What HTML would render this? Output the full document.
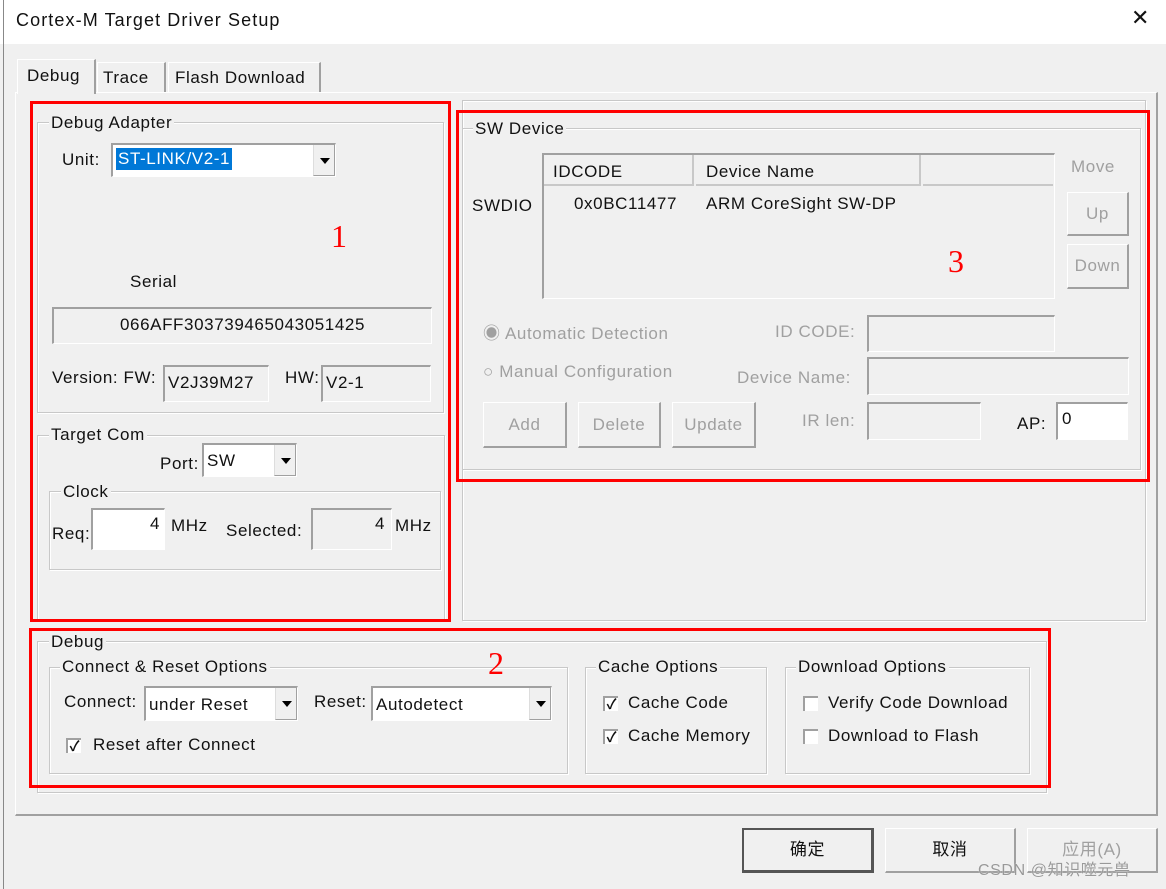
<!DOCTYPE html>
<html><head><meta charset="utf-8"><style>
*{margin:0;padding:0;box-sizing:border-box}
body{width:1166px;height:889px;background:#f0f0f0;position:relative;overflow:hidden;font-family:"Liberation Sans","Noto Sans CJK SC",sans-serif;font-size:17px;color:#111;letter-spacing:0.6px}
div,span{position:absolute}
.t{white-space:nowrap;line-height:20px}
.g{color:#a0a0a0}
.gb{border:1px solid #c8c8c8;box-shadow:inset 1px 1px 0 #fff,1px 1px 0 #fff}
.lbl{background:#f0f0f0;padding:0 2px;line-height:20px;white-space:nowrap}
.sk{border-top:2px solid #a0a0a0;border-left:2px solid #a0a0a0;border-right:1px solid #fff;border-bottom:1px solid #fff;background:#f0f0f0}
.w{background:#fff}
.btn{border:1px solid #fff;border-right:2px solid #a0a0a0;border-bottom:2px solid #a0a0a0;background:#f0f0f0;text-align:center;color:#a0a0a0}
.dd{width:22px;top:0;bottom:0;right:0;background:#f0f0f0;border-left:1px solid #ddd;border-right:1px solid #a0a0a0;border-bottom:1px solid #a0a0a0}
.dd:after{content:"";position:absolute;left:6px;top:13px;border-left:5px solid transparent;border-right:5px solid transparent;border-top:6px solid #000}
.red{border:3px solid #f00}
.cb{width:15px;height:15px;background:#fff;border-top:2px solid #a0a0a0;border-left:2px solid #a0a0a0;font-size:14px;line-height:12px;text-align:center;font-weight:bold;letter-spacing:0}
.num{color:#f00;font-family:"Liberation Serif",serif;font-size:32px}
</style></head><body>
<div style="left:0;top:0;width:1166px;height:44px;background:#fff"></div>
<div style="left:3px;top:0;width:1px;height:889px;background:#888"></div>
<div class="t" style="left:16px;top:10px;font-size:18px;letter-spacing:1.1px">Cortex-M Target Driver Setup</div>
<div class="t" style="left:1131px;top:8px;font-size:22px">✕</div>

<!-- tabs -->
<div style="left:15px;top:92px;width:1143px;height:724px;border-top:1px solid #fff;border-left:1px solid #fff;border-right:2px solid #a0a0a0;border-bottom:2px solid #a0a0a0"></div>
<div style="left:17px;top:59px;width:79px;height:35px;background:#f0f0f0;border-top:1px solid #fff;border-left:1px solid #fff;border-right:2px solid #a0a0a0"></div>
<div class="t" style="left:27px;top:66px">Debug</div>
<div style="left:97px;top:62px;width:69px;height:30px;border-top:1px solid #fff;border-left:1px solid #fff;border-right:2px solid #a0a0a0"></div>
<div class="t" style="left:103px;top:68px">Trace</div>
<div style="left:168px;top:62px;width:153px;height:30px;border-top:1px solid #fff;border-left:1px solid #fff;border-right:2px solid #a0a0a0"></div>
<div class="t" style="left:175px;top:68px">Flash Download</div>

<!-- left panel -->
<div class="gb" style="left:37px;top:122px;width:407px;height:291px"></div>
<div class="lbl" style="left:49px;top:113px">Debug Adapter</div>
<div class="t" style="left:62px;top:150px">Unit:</div>
<div class="sk w" style="left:111px;top:143px;width:225px;height:34px"><span style="left:3px;top:3px;background:#0078d7;color:#fff;padding:0 2px;line-height:22px">ST-LINK/V2-1</span><div class="dd"></div></div>
<div class="num" style="left:331px;top:218px">1</div>
<div class="t" style="left:130px;top:272px">Serial</div>
<div class="sk" style="left:52px;top:307px;width:380px;height:37px;text-align:center;line-height:32px">066AFF303739465043051425</div>
<div class="t" style="left:52px;top:368px">Version: FW:</div>
<div class="sk" style="left:163px;top:365px;width:106px;height:37px;line-height:32px;padding-left:3px">V2J39M27</div>
<div class="t" style="left:285px;top:368px">HW:</div>
<div class="sk" style="left:321px;top:365px;width:110px;height:37px;line-height:32px;padding-left:3px">V2-1</div>

<div class="gb" style="left:37px;top:435px;width:408px;height:185px"></div>
<div class="lbl" style="left:49px;top:425px">Target Com</div>
<div class="t" style="left:160px;top:454px">Port:</div>
<div class="sk w" style="left:202px;top:443px;width:95px;height:34px"><span style="left:3px;top:6px">SW</span><div class="dd"></div></div>
<div class="gb" style="left:49px;top:491px;width:392px;height:79px"></div>
<div class="lbl" style="left:61px;top:482px">Clock</div>
<div class="t" style="left:52px;top:524px">Req:</div>
<div class="sk w" style="left:91px;top:508px;width:74px;height:42px;text-align:right;padding-right:4px;line-height:28px">4</div>
<div class="t" style="left:171px;top:516px">MHz</div>
<div class="t" style="left:226px;top:521px">Selected:</div>
<div class="sk" style="left:311px;top:508px;width:81px;height:42px;text-align:right;padding-right:6px;line-height:28px">4</div>
<div class="t" style="left:395px;top:516px">MHz</div>
<div class="red" style="left:30px;top:101px;width:421px;height:521px"></div>

<!-- right panel -->
<div class="gb" style="left:462px;top:100px;width:684px;height:521px"></div>
<div class="gb" style="left:462px;top:128px;width:679px;height:342px"></div>
<div class="lbl" style="left:473px;top:119px">SW Device</div>
<div class="t" style="left:472px;top:196px">SWDIO</div>
<div class="sk" style="left:542px;top:153px;width:513px;height:146px"></div>
<div style="left:544px;top:155px;width:150px;height:31px;border-right:2px solid #c8c8c8;border-bottom:2px solid #c8c8c8"></div>
<div style="left:696px;top:155px;width:225px;height:31px;border-right:2px solid #c8c8c8;border-bottom:2px solid #c8c8c8"></div>
<div style="left:923px;top:155px;width:130px;height:31px;border-bottom:2px solid #c8c8c8"></div>
<div class="t" style="left:553px;top:162px">IDCODE</div>
<div class="t" style="left:706px;top:162px">Device Name</div>
<div class="t" style="left:574px;top:194px">0x0BC11477</div>
<div class="t" style="left:706px;top:194px">ARM CoreSight SW-DP</div>
<div class="t g" style="left:1071px;top:157px">Move</div>
<div class="btn" style="left:1067px;top:192px;width:62px;height:44px;line-height:42px">Up</div>
<div class="btn" style="left:1067px;top:244px;width:62px;height:45px;line-height:42px">Down</div>
<div class="num" style="left:948px;top:243px">3</div>
<div class="t g" style="left:483px;top:324px">◉ Automatic Detection</div>
<div class="t g" style="left:483px;top:362px">○ Manual Configuration</div>
<div class="t g" style="left:775px;top:322px">ID CODE:</div>
<div class="sk" style="left:867px;top:315px;width:188px;height:37px"></div>
<div class="t g" style="left:737px;top:368px">Device Name:</div>
<div class="sk" style="left:867px;top:357px;width:262px;height:38px"></div>
<div class="btn" style="left:483px;top:402px;width:84px;height:46px;line-height:44px">Add</div>
<div class="btn" style="left:578px;top:402px;width:83px;height:46px;line-height:44px">Delete</div>
<div class="btn" style="left:672px;top:402px;width:84px;height:46px;line-height:44px">Update</div>
<div class="t g" style="left:802px;top:411px">IR len:</div>
<div class="sk" style="left:867px;top:402px;width:114px;height:38px"></div>
<div class="t" style="left:1017px;top:414px">AP:</div>
<div class="sk w" style="left:1056px;top:402px;width:72px;height:38px;padding-left:4px;line-height:30px">0</div>
<div class="red" style="left:456px;top:110px;width:694px;height:372px"></div>

<!-- bottom debug -->
<div class="gb" style="left:37px;top:641px;width:1010px;height:152px"></div>
<div class="lbl" style="left:49px;top:632px">Debug</div>
<div class="gb" style="left:49px;top:667px;width:519px;height:107px"></div>
<div class="lbl" style="left:60px;top:657px">Connect &amp; Reset Options</div>
<div class="t" style="left:64px;top:692px">Connect:</div>
<div class="sk w" style="left:144px;top:686px;width:154px;height:35px"><span style="left:3px;top:7px">under Reset</span><div class="dd"></div></div>
<div class="t" style="left:314px;top:692px">Reset:</div>
<div class="sk w" style="left:371px;top:686px;width:181px;height:35px"><span style="left:3px;top:7px">Autodetect</span><div class="dd"></div></div>
<div class="cb" style="left:66px;top:738px">✓</div>
<div class="t" style="left:93px;top:735px">Reset after Connect</div>
<div class="num" style="left:488px;top:645px">2</div>
<div class="gb" style="left:585px;top:667px;width:182px;height:107px"></div>
<div class="lbl" style="left:596px;top:657px">Cache Options</div>
<div class="cb" style="left:603px;top:696px">✓</div>
<div class="t" style="left:628px;top:693px">Cache Code</div>
<div class="cb" style="left:603px;top:729px">✓</div>
<div class="t" style="left:628px;top:726px">Cache Memory</div>
<div class="gb" style="left:785px;top:667px;width:245px;height:107px"></div>
<div class="lbl" style="left:796px;top:657px">Download Options</div>
<div class="cb" style="left:803px;top:696px"></div>
<div class="t" style="left:828px;top:693px">Verify Code Download</div>
<div class="cb" style="left:803px;top:729px"></div>
<div class="t" style="left:828px;top:726px">Download to Flash</div>
<div class="red" style="left:29px;top:628px;width:1022px;height:160px"></div>

<!-- buttons -->
<div style="left:742px;top:828px;width:132px;height:45px;border:2px solid #555;border-right-width:3px;border-bottom-width:3px;text-align:center;line-height:40px">确定</div>
<div class="btn" style="left:885px;top:828px;width:131px;height:45px;line-height:42px;color:#111">取消</div>
<div class="btn" style="left:1027px;top:828px;width:131px;height:45px;line-height:42px">应用(A)</div>
<div class="t" style="left:978px;top:861px;color:#999;font-size:16px;text-shadow:0 0 1px #fff">CSDN @知识噬元兽</div>
</body></html>
